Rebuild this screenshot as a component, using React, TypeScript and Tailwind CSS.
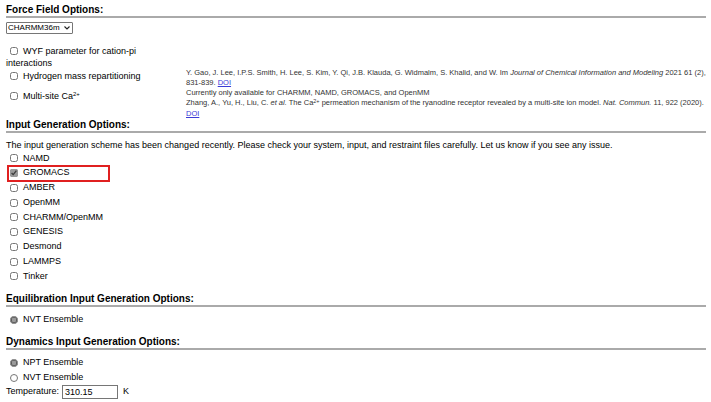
import React from "react";

const Box = ({ checked = false, radio = false }: { checked?: boolean; radio?: boolean }) => (
  <input
    type={radio ? "radio" : "checkbox"}
    defaultChecked={checked}
    className="m-0 mr-[5px] h-[8px] w-[8px] shrink-0 accent-[#9a9a9a]"
  />
);

const Header = ({ children }: { children: React.ReactNode }) => (
  <div className="border-b-2 border-[#aaaaaa] text-[10px] font-bold leading-[12px] text-black">{children}</div>
);

const Doi = () => <span className="text-[#3b3bd6] underline">DOI</span>;

const engines = ["NAMD", "GROMACS", "AMBER", "OpenMM", "CHARMM/OpenMM", "GENESIS", "Desmond", "LAMMPS", "Tinker"];

export default function App() {
  return (
    <div
      className="w-[711px] h-[402px] overflow-hidden bg-white pl-[6px] pr-[5px] pt-[4px] text-[9px] text-black"
      style={{ fontFamily: '"Liberation Sans", Arial, sans-serif' }}
    >
      <Header>Force Field Options:</Header>
      <div className="mt-[4px] flex">
        <div className="relative flex">
          <select className="block h-[12px] w-[67px] appearance-none rounded-[1px] border border-[#767676] bg-white pl-[1px] pr-[10px] text-[8px] leading-[10px]">
            <option>CHARMM36m</option>
          </select>
          <svg
            className="pointer-events-none absolute right-[3px] top-[4px]"
            width="6"
            height="4"
            viewBox="0 0 6 4"
          >
            <path d="M0.5 0.5 L3 3 L5.5 0.5" fill="none" stroke="#222" strokeWidth="1.1" />
          </svg>
        </div>
      </div>

      <div className="mt-[11px] grid grid-cols-[180px_1fr]">
        <div className="h-[23px] pl-[4px] leading-[12px]">
          <div className="flex items-center">
            <Box />
            WYF parameter for cation-pi
          </div>
          <div className="-ml-[4px]">interactions</div>
        </div>
        <div />

        <div className="flex items-center self-start pl-[4px] pt-[2px] leading-[12px]">
          <Box />
          Hydrogen mass repartitioning
        </div>
        <div className="text-[7.5px] leading-[10px] text-[#333]">
          Y. Gao, J. Lee, I.P.S. Smith, H. Lee, S. Kim, Y. Qi, J.B. Klauda, G. Widmalm, S. Khalid, and W. Im{" "}
          <i>Journal of Chemical Information and Modeling</i> 2021 61 (2), 831-839. <Doi />
        </div>

        <div className="flex items-center self-start pl-[4px] pt-[2px] leading-[12px]">
          <Box />
          <span>
            Multi-site Ca<sup className="text-[6px]">2+</sup>
          </span>
        </div>
        <div className="text-[7.5px] leading-[10.3px] text-[#333]">
          <div>Currently only available for CHARMM, NAMD, GROMACS, and OpenMM</div>
          <div>
            Zhang, A., Yu, H., Liu, C. <i>et al.</i> The Ca<sup className="text-[5.5px]">2+</sup> permeation mechanism
            of the ryanodine receptor revealed by a multi-site ion model. <i>Nat. Commun.</i> 11, 922 (2020). <Doi />
          </div>
        </div>
      </div>

      <Header>Input Generation Options:</Header>
      <div className="mt-[6px] leading-[12px]">
        The input generation scheme has been changed recently. Please check your system, input, and restraint files
        carefully. Let us know if you see any issue.
      </div>
      <div className="flex flex-col">
        {engines.map((e) => (
          <div key={e} className="flex h-[14.75px] items-center pl-[4px]">
            {e === "GROMACS" ? (
              <div className="-ml-[3px] flex h-[17px] w-[103px] shrink-0 items-center border-2 border-[#e02020] pl-[1px]">
                <Box checked />
                {e}
              </div>
            ) : (
              <>
                <Box />
                {e}
              </>
            )}
          </div>
        ))}
      </div>

      <div className="mt-[9px]">
        <Header>Equilibration Input Generation Options:</Header>
      </div>
      <div className="mt-[6px] flex h-[14px] items-center pl-[4px]">
        <Box radio checked />
        NVT Ensemble
      </div>

      <div className="mt-[9px]">
        <Header>Dynamics Input Generation Options:</Header>
      </div>
      <div className="mt-[6px] flex h-[14.5px] items-center pl-[4px]">
        <Box radio checked />
        NPT Ensemble
      </div>
      <div className="flex h-[15px] items-center pl-[4px]">
        <Box radio />
        NVT Ensemble
      </div>
      <div className="flex h-[14px] items-center">
        Temperature:
        <input
          defaultValue="310.15"
          className="ml-[3px] mr-[5px] h-[14px] w-[56px] border border-[#767676] px-[2px] text-[9px] leading-[12px]"
        />
        K
      </div>
    </div>
  );
}
